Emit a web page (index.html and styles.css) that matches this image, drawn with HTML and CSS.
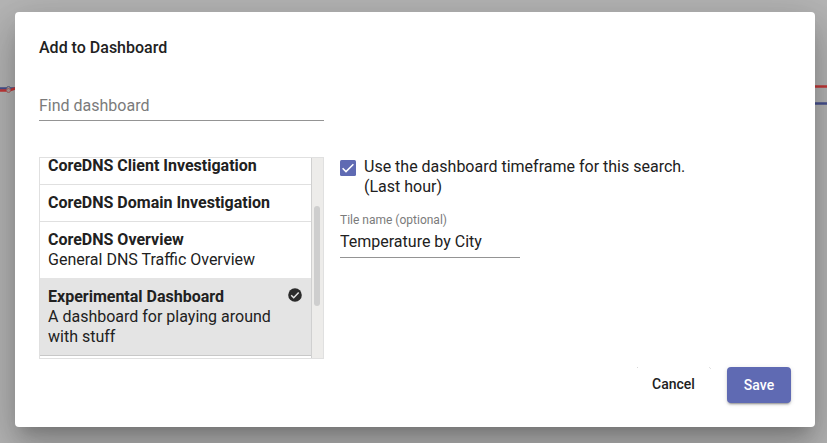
FILE: index.html
```html
<!DOCTYPE html>
<html lang="en">
<head>
<meta charset="utf-8">
<title>Add to Dashboard</title>
<link rel="stylesheet" href="styles.css">
</head>
<body>
<svg class="chart" viewBox="0 0 827 443" aria-hidden="true">
  <path d="M0 88.5H9L18 88.5M812 103.5H827" stroke="#46508f" stroke-width="2.4"/>
  <path d="M0 90.5H9L18 87.5M812 86.5H827" stroke="#c43838" stroke-width="2.4"/>
  <circle cx="8.5" cy="88.5" r="2" fill="#a5a5a5" stroke="#5c6288"/>
  <circle cx="8.5" cy="90.5" r="2" fill="#b0a0a0" stroke="#b06666"/>
</svg>
<main class="dialog">
  <h1 class="title">Add to Dashboard</h1>
  <input class="find" type="text" placeholder="Find dashboard">
  <div class="content">
    <div class="list">
      <ul class="items">
        <li class="item"><b>CoreDNS Client Investigation</b></li>
        <li class="item"><b>CoreDNS Domain Investigation</b></li>
        <li class="item last-plain"><b>CoreDNS Overview</b><span>General DNS Traffic Overview</span></li>
        <li class="item selected"><b>Experimental Dashboard
          <svg class="check" viewBox="0 0 14 14"><circle cx="7" cy="7" r="6.8" fill="#2b2b2b"/><path d="M3.2 7.3l2.5 2.5 5-5.2" fill="none" stroke="#e4e4e4" stroke-width="1.5"/></svg></b>
          <span>A dashboard for playing around with stuff</span></li>
      </ul>
      <div class="scrollbar"><div class="thumb"></div></div>
    </div>
    <div class="settings">
      <label class="option">
        <svg class="box" viewBox="0 0 16 16"><rect width="16" height="16" rx="1.5" fill="#5f6ab3"/><path d="M2.6 8.2l3.4 3.4 7.4-7.4" fill="none" stroke="#fff" stroke-width="1.5"/></svg>
        <span>Use the dashboard timeframe for this search.<br>(Last hour)</span>
      </label>
      <label class="field"><span class="caption">Tile name (optional)</span>
        <input class="tile" type="text" value="Temperature by City"></label>
    </div>
  </div>
  <footer class="actions">
    <button class="button cancel">Cancel</button>
    <button class="button save">Save</button>
  </footer>
</main>
</body>
</html>
```
FILE: styles.css
```css
* { box-sizing: border-box; }
body {
  margin: 0;
  height: 443px;
  padding: 12px 12px 16px 15px;
  overflow: hidden;
  background: #b5b5b5;
  font: 16px/20px Roboto, sans-serif;
  color: #212121;
}
.chart { position: absolute; left: 0; top: 0; width: 827px; height: 443px; fill: none; }
.dialog {
  position: relative;
  width: 800px;
  height: 415px;
  padding: 24px;
  display: flex;
  flex-direction: column;
  background: #fff;
  border-radius: 4px;
  box-shadow: 0 11px 15px -7px rgba(0,0,0,.2), 0 24px 38px 3px rgba(0,0,0,.14), 0 9px 46px 8px rgba(0,0,0,.12);
}
.title { margin: 0 0 44px; font-size: 16px; line-height: 24px; font-weight: 500; }
input {
  display: block;
  border: 0;
  border-bottom: 1px solid #949494;
  border-radius: 0;
  padding: 0;
  background: none;
  outline: 0;
  font: inherit;
  color: inherit;
}
.find { width: 285px; height: 29px; margin-top: -12px; padding-bottom: 2px; }
.find::placeholder { color: #7b7b7b; opacity: 1; }
.content { display: flex; gap: 16px; margin-top: 36px; }
.list {
  width: 285px;
  height: 202px;
  display: flex;
  flex: none;
  border: 1px solid #e0e0e0;
  overflow: hidden;
}
.items { list-style: none; margin: -10px 0 0; padding: 0; width: 271px; flex: none; }
.item { padding: 8px; border-bottom: 1px solid #e0e0e0; }
.item b { display: flex; justify-content: space-between; font-weight: 700; }
.item span { display: block; }
.last-plain { border-color: #e4e4e4; }
.selected { background: #e4e4e4; border-color: #c8c8c8; }
.check { width: 14px; height: 14px; margin: 1px 1.5px 0 0; }
.scrollbar { width: 12px; flex: none; padding: 48px 2px 0; border-left: 1px solid #d0d0d0; background: #edecea; }
.thumb { width: 6px; height: 100px; border-radius: 3px; background: #cecece; }
.option { display: flex; gap: 8px; }
.box { width: 16px; height: 16px; margin-top: 3px; }
.field { display: block; margin-top: 15px; }
.caption { display: block; font-size: 12px; line-height: 16px; color: #7b7b7b; }
.tile { width: 180px; height: 30px; padding-bottom: 3px; }
.actions { display: flex; justify-content: flex-end; gap: 16px; margin-top: 8px; }
.button { height: 36px; padding: 0; border: 0; border-radius: 4px; font: 500 14px/36px Roboto, sans-serif; background: #fff; color: #212121; }
.cancel {
  width: 75px;
  padding-bottom: 2px;
  line-height: 34px;
  border-radius: 0;
  background:
    linear-gradient(45deg, transparent 50%, #d8d8d8 50%) 0 0 / 2px 1px no-repeat,
    linear-gradient(#e2e2e2, #e2e2e2) 1px 0 / 1px 1px no-repeat,
    linear-gradient(#e2e2e2, #e2e2e2) 73px 0 / 1px 1px no-repeat,
    linear-gradient(#e2e2e2, #e2e2e2) 74px 1px / 1px 1px no-repeat,
    #fff;
}
.save { width: 64px; background: #5f6ab3; color: #fff; box-shadow: 0 3px 1px -2px rgba(0,0,0,.2), 0 2px 2px rgba(0,0,0,.14), 0 1px 5px rgba(0,0,0,.12); }
```
